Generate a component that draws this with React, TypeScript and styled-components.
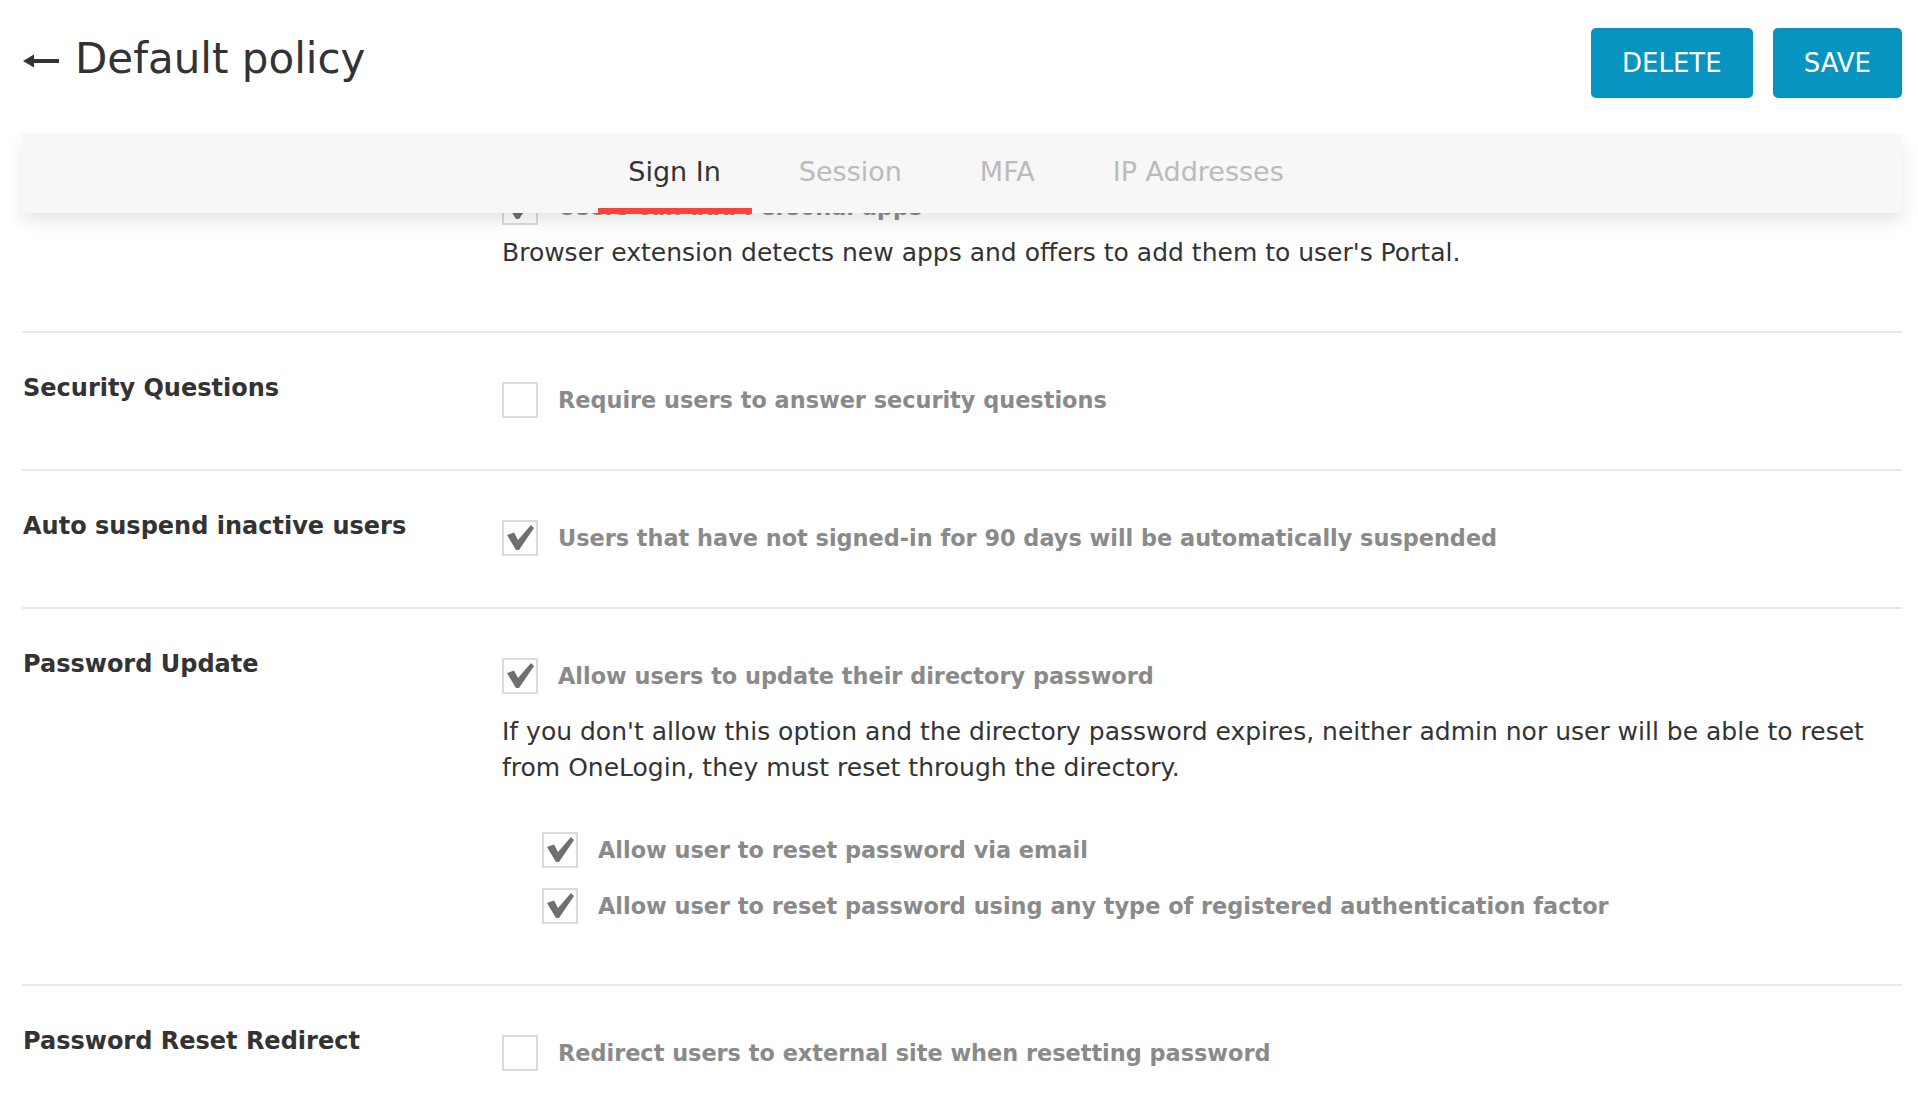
import { useLayoutEffect, useRef } from 'react';
import styled, { createGlobalStyle } from 'styled-components';

const tabs = ['Sign In', 'Session', 'MFA', 'IP Addresses'];

function Checkbox({ checked }: { checked?: boolean }) {
  return (
    <Box>
      {checked && (
        <svg width="32" height="32" viewBox="0 0 32 32">
          <path d="M3 13 L10 10.5 L14 18 L27 3 L30 6 L15 28 L12 28 Z" fill="#6f6f6f" />
        </svg>
      )}
    </Box>
  );
}

function Option({ checked, children }: { checked?: boolean; children: React.ReactNode }) {
  return (
    <OptionRow>
      <Checkbox checked={checked} />
      <OptionText>{children}</OptionText>
    </OptionRow>
  );
}

function App() {
  const contentRef = useRef<HTMLDivElement>(null);

  // page is shown scrolled a little, first row sits under the tabs
  useLayoutEffect(() => {
    if (contentRef.current) contentRef.current.scrollTop = 73;
  }, []);

  return (
    <Page>
      <GlobalStyle />
      <Header>
        <Title>
          <BackArrow width="36" height="14" viewBox="0 0 36 14">
            <path d="M0 7 L11 0.5 L11 13.5 Z" fill="#333" />
            <rect x="9" y="5" width="27" height="4" fill="#333" />
          </BackArrow>
          Default policy
        </Title>
        <Actions>
          <Button>DELETE</Button>
          <Button>SAVE</Button>
        </Actions>
      </Header>
      <TabBar>
        {tabs.map((t, i) => (
          <Tab key={t} $active={i === 0}>
            {t}
          </Tab>
        ))}
      </TabBar>
      <Content ref={contentRef}>
        <Row>
          <Label>Personal Apps</Label>
          <Settings>
            <Option checked>Users can add Personal apps</Option>
            <Description $top={10}>
              Browser extension detects new apps and offers to add them to user's Portal.
            </Description>
          </Settings>
        </Row>
        <Row>
          <Label>Security Questions</Label>
          <Settings>
            <Option>Require users to answer security questions</Option>
          </Settings>
        </Row>
        <Row>
          <Label>Auto suspend inactive users</Label>
          <Settings>
            <Option checked>Users that have not signed-in for 90 days will be automatically suspended</Option>
          </Settings>
        </Row>
        <Row>
          <Label>Password Update</Label>
          <Settings>
            <Option checked>Allow users to update their directory password</Option>
            <Description $top={20}>
              If you don't allow this option and the directory password expires, neither admin nor user will be
              able to reset from OneLogin, they must reset through the directory.
            </Description>
            <SubOptions>
              <Option checked>Allow user to reset password via email</Option>
              <Option checked>Allow user to reset password using any type of registered authentication factor</Option>
            </SubOptions>
          </Settings>
        </Row>
        <Row>
          <Label>Password Reset Redirect</Label>
          <Settings>
            <Option>Redirect users to external site when resetting password</Option>
          </Settings>
        </Row>
      </Content>
    </Page>
  );
}

const GlobalStyle = createGlobalStyle`
  * { box-sizing: border-box; }
  body {
    margin: 0;
    background: #fff;
    font-family: "DejaVu Sans", "Open Sans", sans-serif;
    color: #333;
  }
`;

const Page = styled.div`
  height: 100vh;
  display: flex;
  flex-direction: column;
  padding: 0 16px 0 22px;
  overflow: hidden;
`;

const Header = styled.header`
  display: flex;
  justify-content: space-between;
  align-items: flex-start;
  padding-top: 28px;
`;

const Title = styled.h1`
  display: flex;
  align-items: center;
  gap: 16px;
  margin: 7px 0 0 1px;
  font-size: 42px;
  line-height: 48px;
  font-weight: 400;
  color: #333;
`;

const BackArrow = styled.svg`
  margin-top: 3px;
`;

const Actions = styled.div`
  display: flex;
  gap: 20px;
`;

const Button = styled.button`
  height: 70px;
  padding: 0 31px;
  border: none;
  border-radius: 5px;
  background: #0894c1;
  color: #fff;
  font-family: inherit;
  font-size: 26px;
  cursor: pointer;
`;

const TabBar = styled.nav`
  position: relative;
  z-index: 2;
  flex-shrink: 0;
  display: flex;
  justify-content: center;
  height: 79px;
  margin-top: 36px;
  padding-right: 12px;
  background: #f7f7f7;
  box-shadow: 0 8px 16px rgba(0, 0, 0, 0.1);
`;

const Tab = styled.div<{ $active?: boolean }>`
  position: relative;
  display: flex;
  align-items: center;
  padding: 0 39px 4px;
  font-size: 27px;
  color: ${(p) => (p.$active ? '#333' : '#bbb')};

  &::after {
    content: '';
    display: ${(p) => (p.$active ? 'block' : 'none')};
    position: absolute;
    left: 9px;
    right: 8px;
    bottom: -1px;
    height: 6px;
    background: #ff4136;
  }
`;

const Content = styled.div`
  flex: 1;
  overflow: hidden;
`;

const Row = styled.section`
  display: grid;
  grid-template-columns: 480px 1fr;
  padding: 41px 0 51px;
  border-bottom: 2px solid #e8e8e8;
`;

const Label = styled.div`
  font-size: 24px;
  line-height: 28px;
  font-weight: 700;
  color: #333;
  padding-left: 1px;
`;

const Settings = styled.div`
  padding-top: 8px;
`;

const OptionRow = styled.div`
  display: flex;
  align-items: center;
  gap: 20px;
`;

const Box = styled.div`
  width: 36px;
  height: 36px;
  flex-shrink: 0;
  border: 2px solid #dcdcdc;
  background: #fff;
`;

const OptionText = styled.span`
  font-size: 22.4px;
  font-weight: 700;
  color: #8a8a8a;
`;

const Description = styled.p<{ $top: number }>`
  margin: ${(p) => p.$top}px 0 9px;
  font-size: 25px;
  line-height: 36px;
  color: #333;
`;

const SubOptions = styled.div`
  display: flex;
  flex-direction: column;
  gap: 20px;
  margin: 46px 0 9px 40px;
`;

export default App;
